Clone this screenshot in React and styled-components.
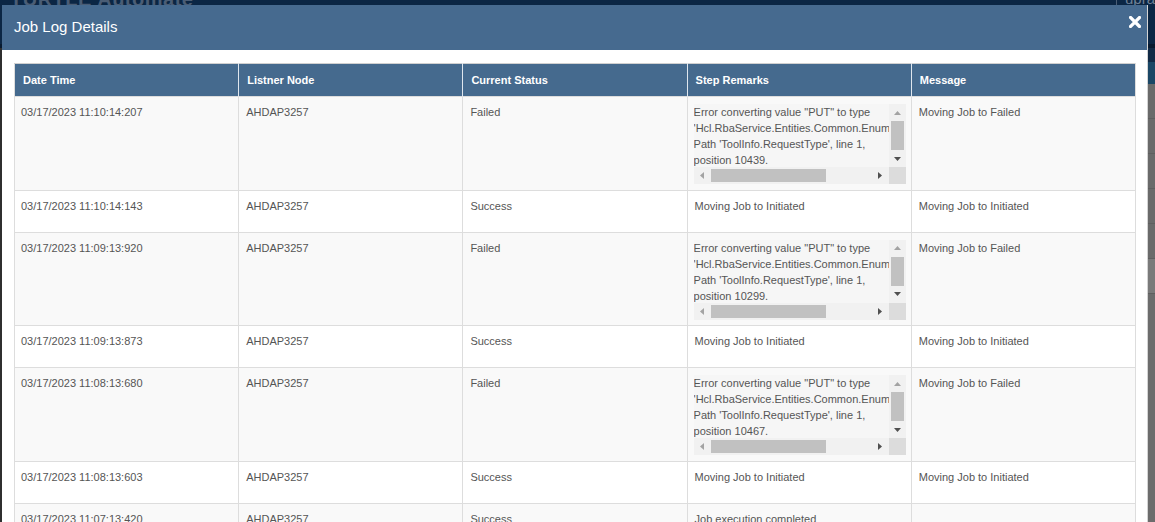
import React from 'react'
import styled, { createGlobalStyle } from 'styled-components'
import { RotateCw } from 'lucide-react'

const GlobalStyle = createGlobalStyle`
  html, body {
    margin: 0;
    padding: 0;
    font-family: "Liberation Sans", Arial, sans-serif;
    background: #3a3a3a;
  }
`

const rows = [
  { time: '03/17/2023 11:10:14:207', node: 'AHDAP3257', status: 'Failed', pos: '10439', msg: 'Moving Job to Failed' },
  { time: '03/17/2023 11:10:14:143', node: 'AHDAP3257', status: 'Success', remark: 'Moving Job to Initiated', msg: 'Moving Job to Initiated' },
  { time: '03/17/2023 11:09:13:920', node: 'AHDAP3257', status: 'Failed', pos: '10299', msg: 'Moving Job to Failed' },
  { time: '03/17/2023 11:09:13:873', node: 'AHDAP3257', status: 'Success', remark: 'Moving Job to Initiated', msg: 'Moving Job to Initiated' },
  { time: '03/17/2023 11:08:13:680', node: 'AHDAP3257', status: 'Failed', pos: '10467', msg: 'Moving Job to Failed' },
  { time: '03/17/2023 11:08:13:603', node: 'AHDAP3257', status: 'Success', remark: 'Moving Job to Initiated', msg: 'Moving Job to Initiated' },
  { time: '03/17/2023 11:07:13:420', node: 'AHDAP3257', status: 'Success', remark: 'Job execution completed', msg: '' },
]

const errorText = (pos) =>
  `Error converting value "PUT" to type 'Hcl.RbaService.Entities.Common.Enums.RequestType'. Path 'ToolInfo.RequestType', line 1, position ${pos}.`

const Arrow = ({ dir, dim }) => {
  const pts = {
    up: '0,4 3.5,0 7,4',
    down: '0,0 3.5,4 7,0',
    left: '4,0 0,3.5 4,7',
    right: '0,0 4,3.5 0,7',
  }[dir]
  const vertical = dir === 'up' || dir === 'down'
  return (
    <svg width={vertical ? 7 : 4} height={vertical ? 4 : 7} viewBox={vertical ? '0 0 7 4' : '0 0 4 7'}>
      <polygon points={pts} fill={dim ? '#a3a3a3' : '#505050'} />
    </svg>
  )
}

const RemarkBox = ({ text }) => (
  <ScrollBox>
    <ScrollText>{text}</ScrollText>
    <VBar>
      <ArrowCell><Arrow dir="up" dim /></ArrowCell>
      <VTrack><VThumb /></VTrack>
      <ArrowCell><Arrow dir="down" /></ArrowCell>
    </VBar>
    <HBar>
      <ArrowCell><Arrow dir="left" dim /></ArrowCell>
      <HTrack><HThumb /></HTrack>
      <ArrowCell><Arrow dir="right" /></ArrowCell>
    </HBar>
    <Corner />
  </ScrollBox>
)

const CloseIcon = () => (
  <svg width="12" height="12" viewBox="0 0 12 12">
    <path d="M1.5 1.5 L10.5 10.5 M10.5 1.5 L1.5 10.5" stroke="#fff" strokeWidth="3.2" strokeLinecap="square" />
  </svg>
)

export default function App() {
  return (
    <Screen>
      <GlobalStyle />
      <Behind>
        <NavBar>
          <Brand>TURTLE Automate</Brand>
          <User>uprakash</User>
        </NavBar>
        <BehindBody>
          <SideStrip />
          <MainArea />
          <RightPanel>
            <PanelHead>Jobs</PanelHead>
            <PanelBand />
            {[0, 1, 2, 3, 4].map((i) => (
              <PanelRow key={i}>
                <RotateCw size={18} color="#1f5a86" strokeWidth={2.5} />
              </PanelRow>
            ))}
            <PanelRow light>tes</PanelRow>
          </RightPanel>
        </BehindBody>
      </Behind>

      <Modal>
        <ModalHeader>
          <Title>Job Log Details</Title>
          <Close><CloseIcon /></Close>
        </ModalHeader>
        <ModalBody>
          <Table>
            <thead>
              <tr>
                <Th>Date Time</Th>
                <Th>Listner Node</Th>
                <Th>Current Status</Th>
                <Th>Step Remarks</Th>
                <Th>Message</Th>
              </tr>
            </thead>
            <tbody>
              {rows.map((r, i) => (
                <Row key={i} odd={i % 2 === 0} tall={!!r.pos}>
                  <Td>{r.time}</Td>
                  <Td>{r.node}</Td>
                  <Td>{r.status}</Td>
                  <Td>{r.pos ? <RemarkBox text={errorText(r.pos)} /> : r.remark}</Td>
                  <Td>{r.msg}</Td>
                </Row>
              ))}
            </tbody>
          </Table>
        </ModalBody>
      </Modal>
    </Screen>
  )
}

const Screen = styled.div`
  position: relative;
  width: 1155px;
  height: 522px;
  overflow: hidden;
`

const Behind = styled.div`
  display: flex;
  flex-direction: column;
  height: 100%;
  background: #5e5e5e;
`

const NavBar = styled.div`
  height: 44px;
  background: #0b2644;
  display: flex;
  justify-content: space-between;
  align-items: flex-start;
  padding: 0 0 0 10px;
  border-bottom: 4px solid #081a2f;
`

const Brand = styled.div`
  font-size: 20px;
  color: #4a5d75;
  margin-top: -12px;
  font-weight: bold;
  letter-spacing: 0.5px;
`

const User = styled.div`
  font-size: 15px;
  color: #6f8196;
  margin-top: -10px;
  padding-left: 8px;
  border-left: 1px solid #4a5d75;
  width: 30px;
  overflow: hidden;
`

const BehindBody = styled.div`
  flex: 1;
  display: flex;
`

const SideStrip = styled.div`
  width: 40px;
  background: #2f2f2f;
`

const MainArea = styled.div`
  flex: 1;
  background: #5a5a5a;
`

const RightPanel = styled.div`
  width: 60px;
  display: flex;
  flex-direction: column;
  background: #6c6c6c;
`

const PanelHead = styled.div`
  height: 14px;
  background: #112a46;
  color: #7f93a8;
  font-size: 13px;
  font-weight: bold;
  padding-left: 10px;
`

const PanelBand = styled.div`
  height: 22px;
  background: #1b4766;
`

const PanelRow = styled.div`
  height: 34px;
  display: flex;
  align-items: center;
  border-bottom: 1px solid #5f5f5f;
  background: ${(p) => (p.light ? '#7a7a7a' : '#6a6a6a')};
  color: #222;
  font-size: 13px;
  padding-left: ${(p) => (p.light ? '0' : '1px')};
`

const Modal = styled.div`
  position: absolute;
  left: 2px;
  top: 5px;
  width: 1145px;
  bottom: -40px;
  background: #fff;
  border-right: 1px solid #d4d4d4;
  display: flex;
  flex-direction: column;
`

const ModalHeader = styled.div`
  height: 45px;
  flex-shrink: 0;
  background: #466a8f;
  display: flex;
  align-items: center;
  justify-content: space-between;
  padding: 0 6px 0 12px;
`

const Title = styled.h4`
  margin: 0 0 2px;
  font-size: 15px;
  font-weight: normal;
  color: #fff;
  line-height: 20px;
`

const Close = styled.span`
  align-self: flex-start;
  margin-top: 11px;
  line-height: 0;
  cursor: pointer;
`

const ModalBody = styled.div`
  padding: 13px 10px 0 12px;
`

const Table = styled.table`
  width: 1122px;
  table-layout: fixed;
  border-collapse: collapse;
  border: 1px solid #dddddd;
  font-size: 11px;
  line-height: 16px;
`

const Th = styled.th`
  background: #456a8e;
  color: #fff;
  text-align: left;
  font-weight: bold;
  height: 33px;
  padding: 0 8px 1px;
  border-top: 1px solid #d0d0d0;
  border-right: 1px solid #dfe6ee;
  box-sizing: border-box;
  &:last-child {
    border-right: 1px solid #dddddd;
  }
`

const Row = styled.tr`
  background: ${(p) => (p.odd ? '#f9f9f9' : '#ffffff')};
  height: ${(p) => (p.tall ? '93.5px' : '42px')};
`

const Td = styled.td`
  vertical-align: top;
  padding: 7px 6px 0 7px;
  color: #555555;
  border: 1px solid #dddddd;
  overflow: hidden;
  &:first-child {
    padding-left: 6px;
  }
`

const ScrollBox = styled.div`
  display: grid;
  grid-template-columns: 1fr 17px;
  grid-template-rows: 63px 17px;
  width: 212px;
  margin-left: -1px;
  background: #f6f6f6;
`

const ScrollText = styled.div`
  overflow: hidden;
  white-space: normal;
  color: #555555;
`

const VBar = styled.div`
  display: flex;
  flex-direction: column;
  background: #f1f1f1;
`

const HBar = styled.div`
  display: flex;
  background: #f1f1f1;
`

const ArrowCell = styled.div`
  flex: 0 0 17px;
  height: 17px;
  display: flex;
  align-items: center;
  justify-content: center;
`

const VTrack = styled.div`
  flex: 1;
  display: flex;
  flex-direction: column;
`

const VThumb = styled.div`
  height: 29px;
  margin: 0 2px;
  background: #c1c1c1;
`

const HTrack = styled.div`
  flex: 1;
  display: flex;
  align-items: stretch;
`

const HThumb = styled.div`
  width: 115px;
  margin: 2px 0;
  background: #c1c1c1;
`

const Corner = styled.div`
  background: #dcdcdc;
`
